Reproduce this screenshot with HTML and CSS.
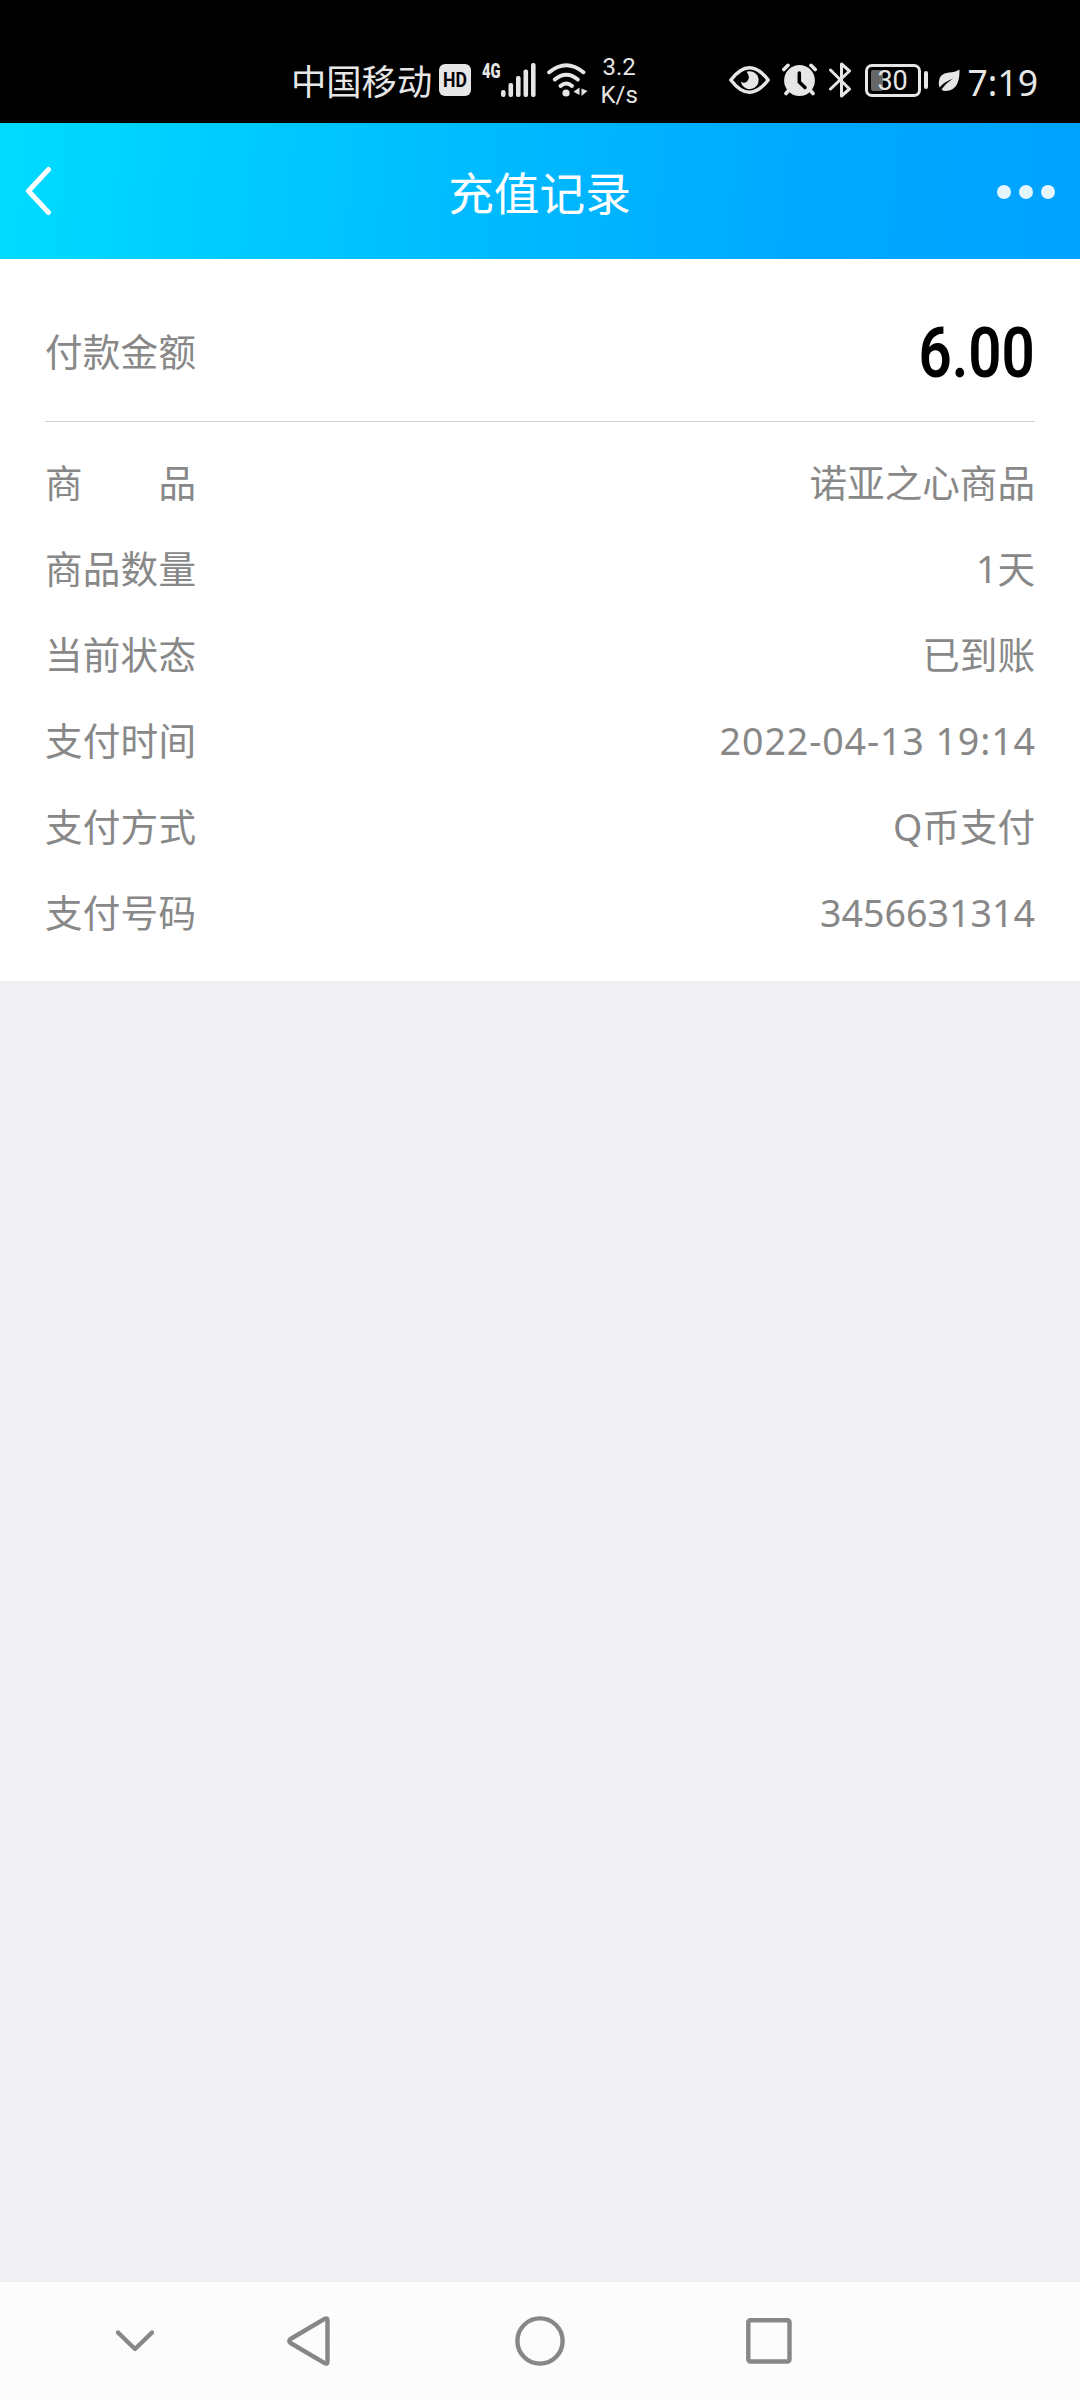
FILE: index.html
```html
<!DOCTYPE html>
<html lang="zh-CN">
<head>
  <meta charset="UTF-8">
  <meta name="viewport" content="width=device-width, initial-scale=1.0">
  <title>充值记录</title>
  <link rel="stylesheet" href="styles.css">
</head>
<body>
  <div class="status-bar">
    <div class="status-left">
      <span class="carrier">中国移动</span>
      <span class="hd"><b>HD</b></span>
      <div class="signal">
        <span class="net">4G</span>
        <svg width="35" height="34" viewBox="0 0 35 34" fill="#e6e6e6">
          <rect x="0" y="27" width="4.6" height="7" rx="2.2"/>
          <rect x="7.5" y="20" width="4.6" height="14" rx="2"/>
          <rect x="15" y="13" width="4.6" height="21" rx="2"/>
          <rect x="22.5" y="6.5" width="4.6" height="27.5" rx="2"/>
          <rect x="30" y="0" width="4.6" height="34" rx="2"/>
        </svg>
      </div>
      <svg class="wifi" width="42" height="34" viewBox="0 0 42 34" fill="none" stroke="#e6e6e6" stroke-width="4" stroke-linecap="round">
        <path d="M2.2 9.2Q19.3-4.8 36.4 9.2"/>
        <path d="M7.8 16.5Q19.3 7 30.8 16.5"/>
        <path d="M13.5 23Q19.3 18 25 23"/>
        <circle cx="19" cy="30" r="3.6" fill="#e6e6e6" stroke="none"/>
        <path d="M32.5 24.5V32L26.5 28.8ZM34.5 25.5L40.5 28L34.5 33Z" fill="#e6e6e6" stroke="none"/>
      </svg>
      <div class="speed"><span>3.2</span><span>K/s</span></div>
    </div>
    <div class="status-right">
      <svg width="41" height="28" viewBox="0 0 41 28">
        <path d="M1.8 14Q20.5-10.5 39.2 14Q20.5 38.5 1.8 14Z" fill="none" stroke="#e6e6e6" stroke-width="3.5" stroke-linejoin="round"/>
        <path d="M20 5.2A9 9 0 1 1 11.8 15.5Q15 18 18 15.5Q22 11 17.5 5.7Z" fill="#e6e6e6"/>
      </svg>
      <svg class="alarm" width="35" height="34" viewBox="0 0 35 34">
        <g stroke="#e6e6e6" stroke-width="3.6" stroke-linecap="round">
          <path d="M1.8 6.5L6 2.3M33.2 6.5L29 2.3M7 27L4 30.5M28 27L31 30.5"/>
        </g>
        <circle cx="17.5" cy="17.5" r="15.4" fill="#e6e6e6"/>
        <path d="M17.3 10V19L23 24.5" fill="none" stroke="#000" stroke-width="3.5" stroke-linecap="round"/>
      </svg>
      <svg class="bluetooth" width="23" height="36" viewBox="0 0 23 36" fill="none" stroke="#e6e6e6" stroke-width="3" stroke-linecap="round" stroke-linejoin="round">
        <path d="M1.5 8L20.5 27L12.5 34V2L20.5 9L1.5 27"/>
      </svg>
      <div class="battery"><span class="level"></span><span class="percent">30</span></div>
      <span class="battery-cap"></span>
      <svg class="leaf" width="22" height="23" viewBox="0 0 22 23">
        <path d="M21.5 0.5Q22 21 8 22Q5 22 3.5 20.5Q8 14 15 9.5Q6 13 1.5 18.5Q-2 5 11 3.5Q17 3.5 21.5 0.5Z" fill="#e6e6e6"/>
      </svg>
      <span class="clock">7:19</span>
    </div>
  </div>

  <div class="header">
    <svg class="back" width="27" height="50" viewBox="0 0 27 50" fill="none" stroke="#fff" stroke-width="5" stroke-linecap="round" stroke-linejoin="round">
      <path d="M23.5 3.5L3.5 25L23.5 46.5"/>
    </svg>
    <h1>充值记录</h1>
    <div class="more"><i></i><i></i><i></i></div>
  </div>

  <div class="card">
    <div class="row amount">
      <span class="label">付款金额</span>
      <span class="price">6.00</span>
    </div>
    <div class="details">
      <div class="row"><span class="label">商 品</span><span>诺亚之心商品</span></div>
      <div class="row"><span class="label">商品数量</span><span>1天</span></div>
      <div class="row"><span class="label">当前状态</span><span>已到账</span></div>
      <div class="row"><span class="label">支付时间</span><span class="date">2022-04-13 19:14</span></div>
      <div class="row"><span class="label">支付方式</span><span>Q币支付</span></div>
      <div class="row"><span class="label">支付号码</span><span>3456631314</span></div>
    </div>
  </div>

  <div class="nav-bar">
    <svg width="38" height="22" viewBox="0 0 38 22">
      <path d="M2 2.5L19 19L36 2.5"/>
    </svg>
    <svg class="nav-back" width="43" height="50" viewBox="0 0 43 50">
      <path d="M38 2.7Q40.5 1.5 40.5 4.5V45.5Q40.5 48.5 38 47.3L3.5 27Q1 25 3.5 23Z"/>
    </svg>
    <svg class="nav-home" width="50" height="50" viewBox="0 0 50 50">
      <circle cx="25" cy="25" r="22.6"/>
    </svg>
    <svg class="nav-recent" width="46" height="46" viewBox="0 0 46 46">
      <rect x="2.3" y="2.3" width="41.2" height="41.2" rx="2"/>
    </svg>
  </div>
</body>
</html>
```

FILE: styles.css
```css
:root {
  --status-color: #e6e6e6;
  --text-color: #888;
  --line-color: #d0d0d0;
  --page-bg: #efeff4;
}

* {
  box-sizing: border-box;
}

body {
  margin: 0;
  min-height: 2400px;
  display: flex;
  flex-direction: column;
  background-color: var(--page-bg);
  color: var(--text-color);
  font-family: "Noto Sans", "Noto Sans CJK SC", sans-serif;
}

svg {
  display: block;
  flex-shrink: 0;
}

/* status bar */
.status-bar {
  height: 123px;
  padding: 37px 42px 0 291px;
  display: flex;
  justify-content: space-between;
  background-color: #000;
  color: var(--status-color);
}

.status-left, .status-right {
  height: 86px;
  display: flex;
  align-items: center;
}

.carrier {
  padding-top: 2px;
  font-size: 35.3px;
  line-height: 86px;
}

.hd {
  width: 32px;
  height: 32px;
  margin-left: 7px;
  border-radius: 6px;
  background-color: var(--status-color);
  color: #000;
  font: 21px/33px Roboto, sans-serif;
  text-align: center;
}

.hd b {
  display: block;
  transform: scaleX(0.84);
}

.signal {
  margin-left: 11px;
  display: flex;
}

.net {
  width: 19px;
  font: 900 21px/16px Roboto, sans-serif;
  transform: scaleX(0.7);
  transform-origin: left top;
}

.wifi {
  margin-left: 11px;
}

.speed {
  width: 50px;
  margin-left: 5px;
  padding-top: 2px;
  display: flex;
  flex-direction: column;
  text-align: center;
  font: 24px/28px Roboto, sans-serif;
}

.alarm {
  margin-left: 12px;
}

.bluetooth {
  margin-left: 12px;
}

.battery {
  position: relative;
  width: 56px;
  height: 33px;
  margin-left: 13px;
  border: 3px solid var(--status-color);
  border-radius: 7px;
}

.level {
  position: absolute;
  left: 3px;
  top: 3px;
  width: 12px;
  height: 21px;
  border-radius: 2px;
  background-color: #666;
}

.percent {
  position: relative;
  display: block;
  text-align: center;
  font: 27px/28px Roboto, sans-serif;
}

.battery-cap {
  width: 4px;
  height: 18px;
  margin-left: 3px;
  border-radius: 2px;
  background-color: var(--status-color);
}

.leaf {
  margin-left: 10px;
}

.clock {
  margin-left: 8px;
  padding-top: 3px;
  font-size: 35.5px;
  line-height: 86px;
}

/* title bar */
.header {
  height: 136px;
  padding: 0 25px;
  display: flex;
  align-items: center;
  justify-content: space-between;
  background: linear-gradient(95deg, #00dcff 0%, #00c6ff 28%, #00b6ff 52%, #00a9ff 74%, #00a3ff 100%);
  color: #fff;
}

.header h1 {
  margin: 0;
  padding-top: 4px;
  font-size: 45.7px;
  font-weight: normal;
  line-height: 132px;
}

.back {
  margin-right: 30px;
}

.more {
  padding-top: 2px;
  display: flex;
  gap: 8px;
}

.more i {
  width: 14px;
  height: 14px;
  border-radius: 50%;
  background-color: #e6f6ff;
}

/* payment details */
.card {
  height: 722px;
  padding: 0 45px;
  background-color: #fff;
}

.row {
  height: 86px;
  display: flex;
  align-items: center;
  justify-content: space-between;
  font-size: 37.6px;
  line-height: 86px;
}

.amount {
  height: 163px;
  padding-top: 24px;
  border-bottom: 1px solid var(--line-color);
}

.label {
  width: 151px;
  text-align-last: justify;
}

.price {
  padding-top: 2px;
  color: #000;
  font: 600 71px/86px Roboto, sans-serif;
  transform: scaleX(0.82);
  transform-origin: right center;
}

.details {
  padding-top: 18px;
}

.date {
  margin-right: -1px;
  letter-spacing: 0.9px;
}

/* system navigation */
.nav-bar {
  height: 118px;
  margin-top: auto;
  padding: 0 0 2px 116px;
  display: flex;
  align-items: center;
  border-top: 2px solid #fff;
  background-color: #fcfcfc;
}

.nav-bar svg {
  fill: none;
  stroke: #878787;
  stroke-width: 4.4;
  stroke-linecap: round;
  stroke-linejoin: round;
}

.nav-bar .nav-back {
  margin-left: 133px;
}

.nav-bar .nav-home {
  margin-left: 185px;
}

.nav-bar .nav-recent {
  margin-left: 181px;
}
```
